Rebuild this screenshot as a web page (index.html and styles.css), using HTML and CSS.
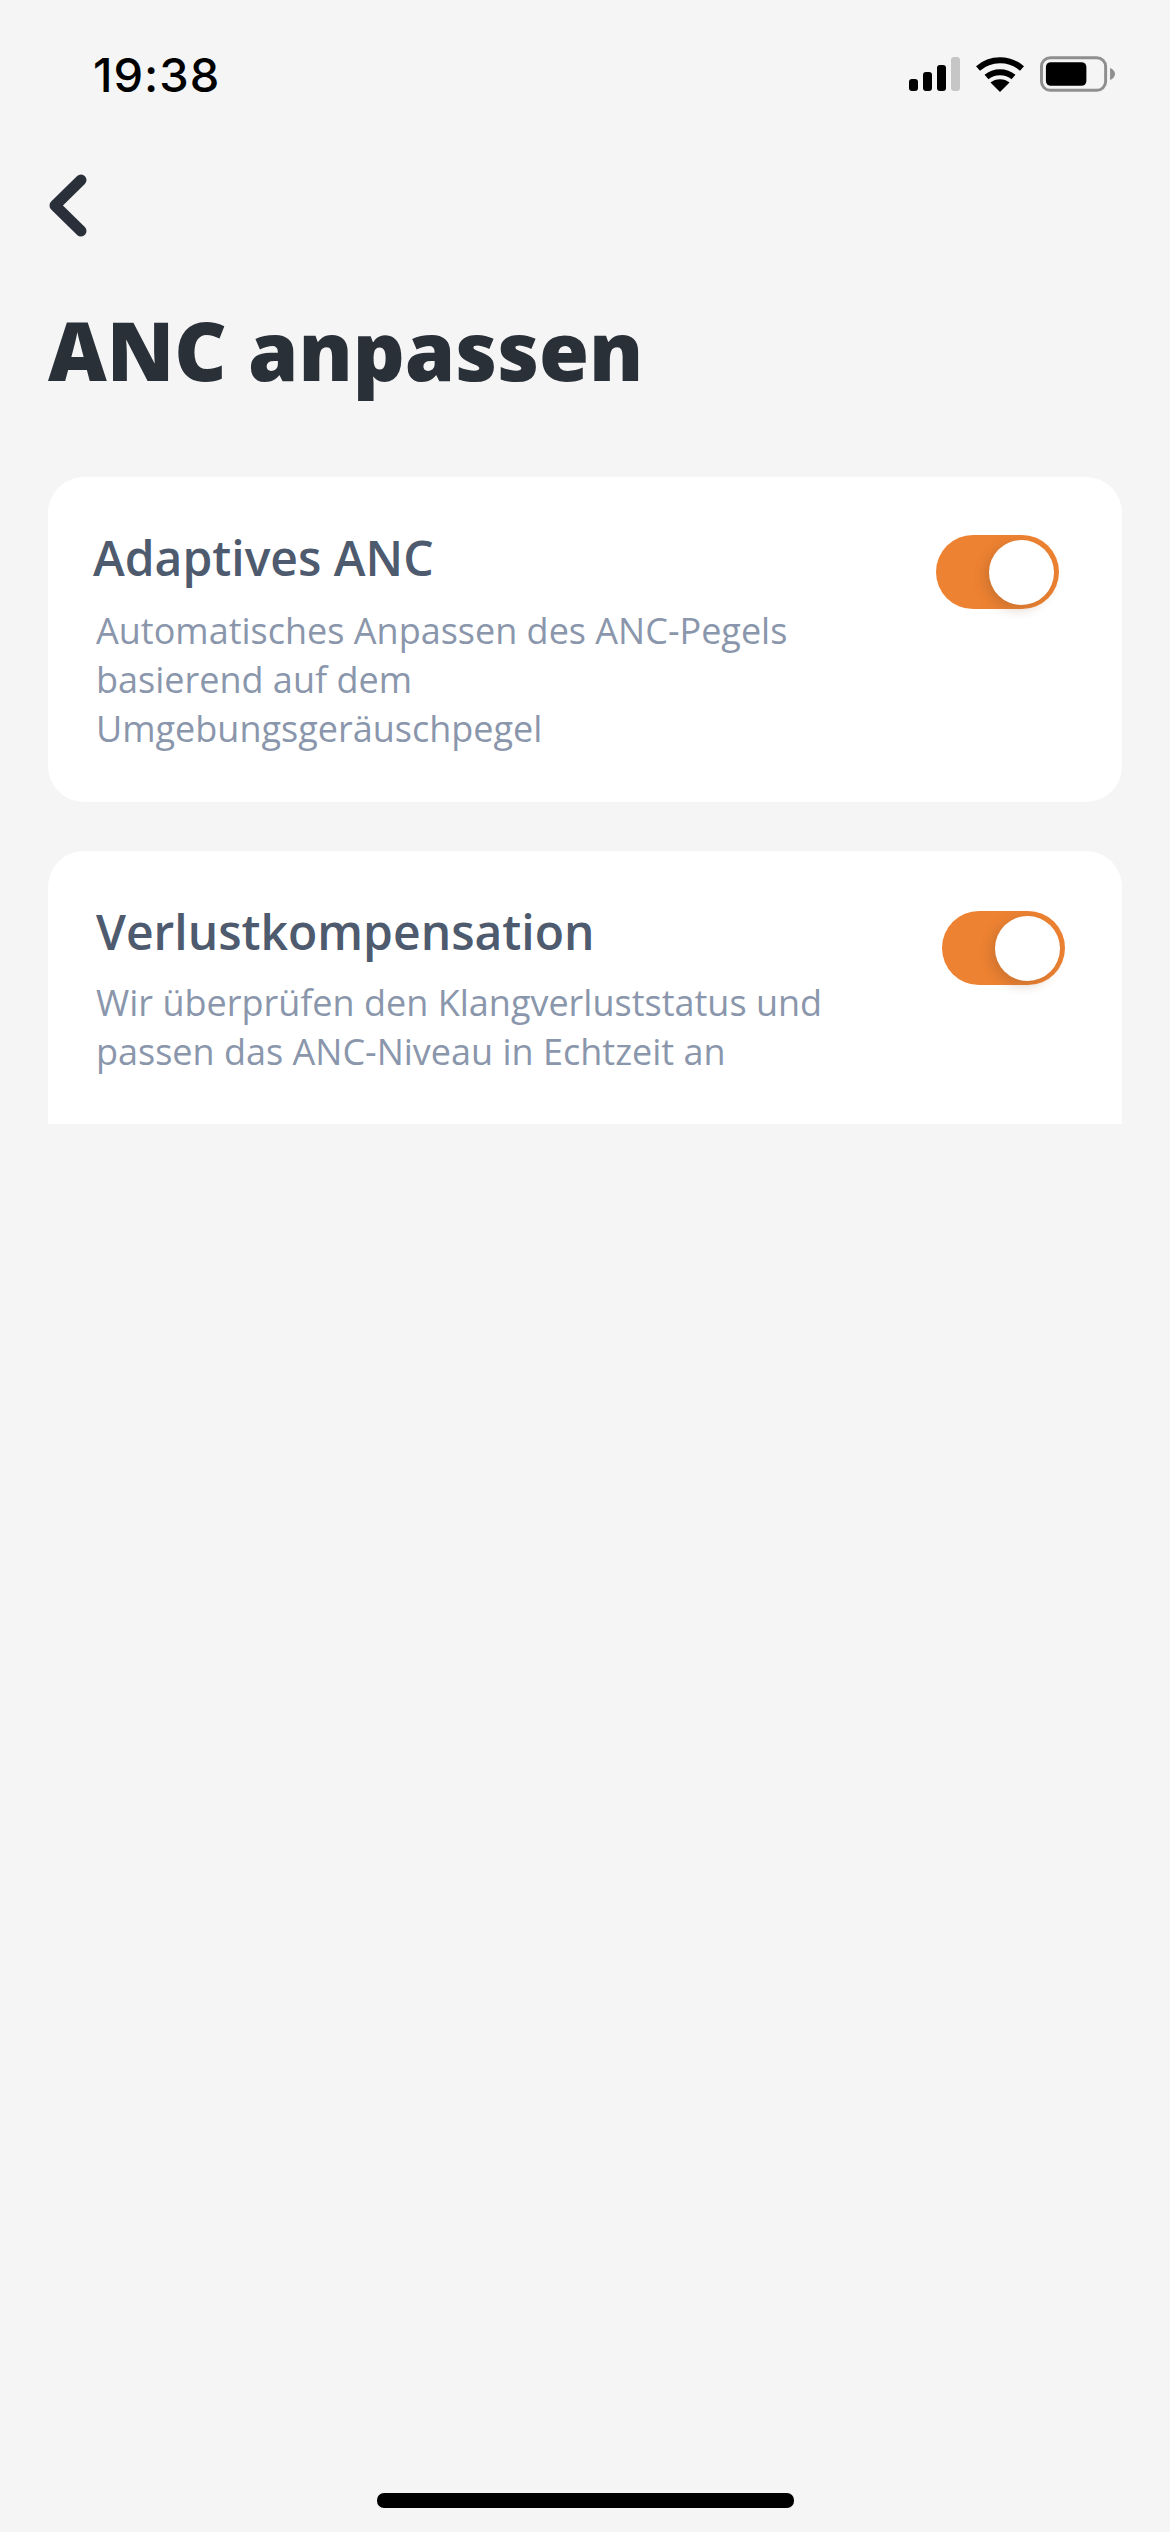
FILE: index.html
```html
<!DOCTYPE html>
<html lang="de">
<head>
    <meta charset="UTF-8">
    <meta name="viewport" content="width=device-width, initial-scale=1.0">
    <title>ANC anpassen</title>
    <link rel="stylesheet" href="styles.css">
</head>
<body>
    <div class="status-bar">
        <span class="time">19:38</span>
        <div class="status-icons">
            <svg class="signal" width="51" height="34" viewBox="0 0 51 34">
                <rect x="0" y="22" width="9" height="12" rx="3" fill="#000"/>
                <rect x="14" y="15" width="9" height="19" rx="3" fill="#000"/>
                <rect x="28" y="8" width="9" height="26" rx="3" fill="#000"/>
                <rect x="42" y="0" width="9" height="34" rx="3" fill="#c6c6c6"/>
            </svg>
            <svg class="wifi" width="48" height="36" viewBox="0 0 48 36">
                <path d="M2 12.500 C14.500 1.500 33.500 1.500 46 12.500" fill="none" stroke="#000" stroke-width="6"/>
                <path d="M10.500 21 C18 14.500 30 14.500 37.500 21" fill="none" stroke="#000" stroke-width="6"/>
                <path d="M24 36 L14.500 26.500 C19.500 22 28.500 22 33.500 26.500 Z" fill="#000"/>
            </svg>
            <svg class="battery" width="75" height="37" viewBox="0 0 76 37">
                <rect x="1.500" y="1.500" width="65" height="33" rx="9" fill="none" stroke="#8f8f8f" stroke-width="3"/>
                <rect x="6" y="6" width="41" height="24" rx="5" fill="#000"/>
                <path d="M71 12 C74 13 76 15.500 76 18 C76 20.500 74 23 71 24 Z" fill="#8f8f8f"/>
            </svg>
        </div>
    </div>

    <main class="content">
        <svg class="back" width="40" height="64" viewBox="0 0 40 64">
            <path d="M33 6 L7 31.500 L33 57" fill="none" stroke="#2a3039" stroke-width="11" stroke-linecap="round" stroke-linejoin="round"/>
        </svg>
        <h1 class="page-title">ANC anpassen</h1>

        <div class="card-list">
            <section class="card card-adaptive">
                <div class="card-text">
                    <h2 class="card-title title-adaptive">Adaptives ANC</h2>
                    <p class="card-desc">Automatisches Anpassen des ANC-Pegels<br>basierend auf dem<br>Umgebungsgeräuschpegel</p>
                </div>
                <div class="toggle"><span class="knob"></span></div>
            </section>

            <section class="card card-loss">
                <div class="card-text">
                    <h2 class="card-title">Verlustkompensation</h2>
                    <p class="card-desc">Wir überprüfen den Klangverluststatus und<br>passen das ANC-Niveau in Echtzeit an</p>
                </div>
                <div class="toggle"><span class="knob"></span></div>
            </section>
        </div>
    </main>

    <div class="home-bar"></div>
</body>
</html>
```

FILE: styles.css
```css
html, body {
    margin: 0;
    padding: 0;
}
body {
    width: 1170px;
    height: 2532px;
    overflow: hidden;
    display: flex;
    flex-direction: column;
    background-color: #f5f5f5;
    font-family: "Open Sans", sans-serif;
}
.status-bar {
    display: flex;
    justify-content: space-between;
    align-items: center;
    height: 148px;
    padding: 0 55px 0 93px;
}
.time {
    font-family: Inter, sans-serif;
    font-size: 47px;
    font-weight: 500;
    letter-spacing: 1px;
    color: #000;
}
.status-icons {
    display: flex;
    align-items: center;
    gap: 16px;
}
.content {
    flex: 1;
    padding: 26px 48px 0;
}
.back {
    display: block;
}
.page-title {
    margin: 55px 0 0;
    font-size: 81px;
    line-height: 114px;
    font-weight: 800;
    color: #2a3038;
}
.card-list {
    display: flex;
    flex-direction: column;
    gap: 49px;
    margin-top: 70px;
}
.card {
    display: flex;
    justify-content: space-between;
    align-items: flex-start;
    background-color: #fff;
    border-radius: 36px;
}
.card-adaptive {
    height: 325px;
    padding-right: 63px;
}
.card-loss {
    height: 273px;
    padding-right: 57px;
    border-radius: 36px 36px 0 0;
}
.card-text {
    padding: 48px 0 0 48px;
}
.card-title {
    margin: 0;
    font-size: 48px;
    line-height: 66px;
    font-weight: 600;
    color: #4e5a6e;
}
.title-adaptive {
    margin-left: -3px;
}
.card-desc {
    margin: 15px 0 0;
    font-size: 36px;
    line-height: 49px;
    color: #8a96ab;
}
.card-loss .card-desc {
    margin-top: 13px;
}
.toggle {
    display: flex;
    justify-content: flex-end;
    align-items: center;
    width: 123px;
    height: 74px;
    margin-top: 58px;
    padding-right: 5px;
    box-sizing: border-box;
    background-color: #ed8232;
    border-radius: 37px;
}
.card-loss .toggle {
    margin-top: 60px;
}
.knob {
    width: 65px;
    height: 65px;
    background-color: #fff;
    border-radius: 50%;
    box-shadow: -4px 4px 12px rgba(130, 80, 40, 0.3);
}
.home-bar {
    width: 417px;
    height: 15px;
    margin: 0 auto 24px;
    background-color: #000;
    border-radius: 7px;
}
```
